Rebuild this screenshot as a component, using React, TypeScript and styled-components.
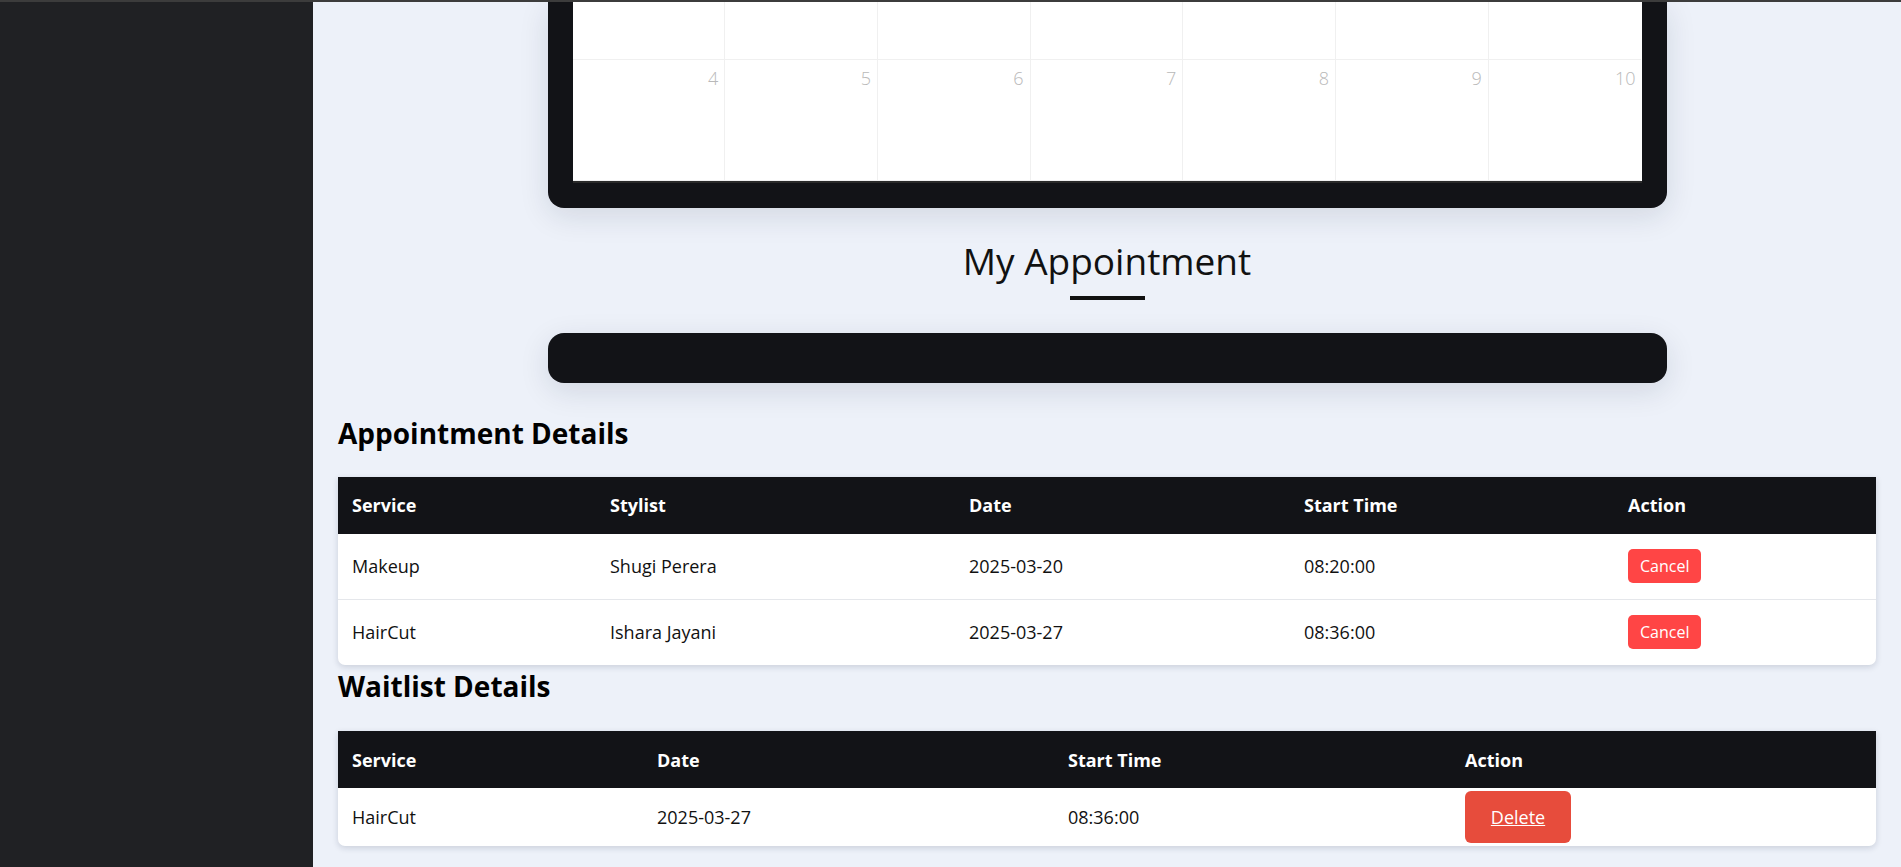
import React from "react";
import styled, {createGlobalStyle} from "styled-components";

const GlobalStyle = createGlobalStyle`
	html, body {
		margin: 0;
		padding: 0;
		height: 100%;
		overflow: hidden;
	}

	body {
		background: #edf1f9;
		font-family: "Open Sans", "Noto Sans", sans-serif;
		color: #111;
	}
`;

const Shell = styled.div`
	display: flex;
	flex-direction: column;
	height: 100vh;
`;

const TopStrip = styled.div`
	height: 2px;
	background: #3c3c3c;
	flex-shrink: 0;
`;

const Body = styled.div`
	display: flex;
	flex: 1;
	min-height: 0;
`;

const Sidebar = styled.aside`
	width: 313px;
	flex-shrink: 0;
	background: #202124;
`;

const Main = styled.main`
	flex: 1;
	padding: 0 25px;
	overflow: hidden;
`;

const DarkCard = styled.div<{$cut?: boolean}>`
	width: 1119px;
	box-sizing: border-box;
	margin: 0 auto;
	background: #121317;
	padding: ${p => p.$cut ? "0 25px 25px" : "25px"};
	border-radius: ${p => p.$cut ? "0 0 16px 16px" : "16px"};
	box-shadow: 0 8px 30px rgba(20, 30, 60, 0.12);
`;

const CalendarGrid = styled.div`
	display: grid;
	grid-template-columns: repeat(7, 1fr);
	background: #fff;
	border-bottom: 2px solid #2a2a2a;
`;

const DayCell = styled.div<{$height: number; $last?: boolean}>`
	height: ${p => p.$height}px;
	box-sizing: border-box;
	border-right: ${p => p.$last ? "none" : "1px solid #f0f0f0"};
	border-bottom: 1px solid #f0f0f0;
	padding: 6px 6px 0 0;
	text-align: right;
	font-size: 18px;
	font-weight: 300;
	color: #b9b9b9;
`;

const Title = styled.h1`
	margin: 30px 0 0;
	text-align: center;
	font-size: 37px;
	font-weight: 500;
	line-height: 1.25;
	color: #111;

	&::after {
		content: "";
		display: block;
		width: 75px;
		height: 4px;
		background: #111;
		margin: 12px auto 0;
	}
`;

const EmptyBar = styled(DarkCard)`
	margin-top: 33px;
`;

const SectionHeading = styled.h2<{$top: number}>`
	margin: ${p => p.$top}px 0 0;
	font-size: 28px;
	font-weight: 700;
	line-height: 1.3;
	color: #000;
`;

const TableCard = styled.table<{$top: number}>`
	width: 100%;
	margin-top: ${p => p.$top}px;
	border-collapse: collapse;
	table-layout: fixed;
	background: #fff;
	border-radius: 0 0 7px 7px;
	box-shadow: 0 2px 6px rgba(20, 30, 60, 0.16);
	overflow: hidden;
`;

const HeadCell = styled.th`
	height: 57px;
	padding: 0 14px;
	background: #121317;
	color: #fff;
	text-align: left;
	font-size: 18px;
	font-weight: 700;
`;

const Row = styled.tr`
	& + & > td {
		border-top: 1px solid #e5e7eb;
	}
`;

const Cell = styled.td<{$height: number}>`
	height: ${p => p.$height}px;
	padding: 0 14px;
	font-size: 18px;
	color: #111;
	vertical-align: middle;
`;

const CancelButton = styled.button`
	border: none;
	border-radius: 5px;
	background: #ff4545;
	color: #fff;
	font-family: inherit;
	font-size: 16px;
	height: 34px;
	padding: 0 12px;
	cursor: pointer;
`;

const DeleteButton = styled.a`
	display: inline-flex;
	align-items: center;
	justify-content: center;
	width: 106px;
	height: 52px;
	border-radius: 6px;
	background: #e74c3c;
	color: #fff;
	font-size: 18px;
	text-decoration: underline;
	cursor: pointer;
`;

const weekRows = [
	{height: 58, days: ["", "", "", "", "", "", ""]},
	{height: 121, days: ["4", "5", "6", "7", "8", "9", "10"]}
];

const appointments = [
	{service: "Makeup", stylist: "Shugi Perera", date: "2025-03-20", start: "08:20:00"},
	{service: "HairCut", stylist: "Ishara Jayani", date: "2025-03-27", start: "08:36:00"}
];

const waitlist = [
	{service: "HairCut", date: "2025-03-27", start: "08:36:00"}
];

function Columns ({widths}: {widths: number[]}) {
	const total = widths.reduce((a, b) => a + b, 0);
	return (
		<colgroup>
			{widths.map((w, i) => <col key={i} style={{width: `${(w / total) * 100}%`}} />)}
		</colgroup>
	);
}

export default function App () {
	return (
		<Shell>
			<GlobalStyle />
			<TopStrip />
			<Body>
				<Sidebar />
				<Main>
					<DarkCard $cut>
						<CalendarGrid>
							{weekRows.map((row, r) =>
								row.days.map((d, i) => (
									<DayCell key={`${r}-${i}`} $height={row.height} $last={i === 6}>{d}</DayCell>
								))
							)}
						</CalendarGrid>
					</DarkCard>

					<Title>My Appointment</Title>
					<EmptyBar />

					<SectionHeading $top={32}>Appointment Details</SectionHeading>
					<TableCard $top={25}>
						<Columns widths={[258, 359, 335, 324, 262]} />
						<thead>
						<tr>
							<HeadCell>Service</HeadCell>
							<HeadCell>Stylist</HeadCell>
							<HeadCell>Date</HeadCell>
							<HeadCell>Start Time</HeadCell>
							<HeadCell>Action</HeadCell>
						</tr>
						</thead>
						<tbody>
						{appointments.map(a => (
							<Row key={a.service + a.date}>
								<Cell $height={65}>{a.service}</Cell>
								<Cell $height={65}>{a.stylist}</Cell>
								<Cell $height={65}>{a.date}</Cell>
								<Cell $height={65}>{a.start}</Cell>
								<Cell $height={65}><CancelButton>Cancel</CancelButton></Cell>
							</Row>
						))}
						</tbody>
					</TableCard>

					<SectionHeading $top={3}>Waitlist Details</SectionHeading>
					<TableCard $top={27}>
						<Columns widths={[305, 411, 397, 425]} />
						<thead>
						<tr>
							<HeadCell>Service</HeadCell>
							<HeadCell>Date</HeadCell>
							<HeadCell>Start Time</HeadCell>
							<HeadCell>Action</HeadCell>
						</tr>
						</thead>
						<tbody>
						{waitlist.map(w => (
							<Row key={w.service + w.date}>
								<Cell $height={58}>{w.service}</Cell>
								<Cell $height={58}>{w.date}</Cell>
								<Cell $height={58}>{w.start}</Cell>
								<Cell $height={58}><DeleteButton>Delete</DeleteButton></Cell>
							</Row>
						))}
						</tbody>
					</TableCard>
				</Main>
			</Body>
		</Shell>
	);
}
